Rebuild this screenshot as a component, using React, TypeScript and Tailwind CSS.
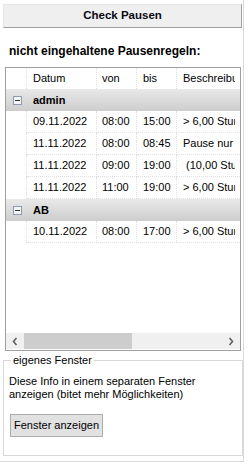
import React from 'react';

type Row = { datum: string; von: string; bis: string; text: string };
type Group = { name: string; rows: Row[] };

const groups: Group[] = [
  {
    name: 'admin',
    rows: [
      { datum: '09.11.2022', von: '08:00', bis: '15:00', text: '> 6,00 Stunden ohne Pause' },
      { datum: '11.11.2022', von: '08:00', bis: '08:45', text: 'Pause nur 0,25 Stunden' },
      { datum: '11.11.2022', von: '09:00', bis: '19:00', text: '\u00a0(10,00 Stunden)' },
      { datum: '11.11.2022', von: '11:00', bis: '19:00', text: '> 6,00 Stunden ohne Pause' },
    ],
  },
  {
    name: 'AB',
    rows: [{ datum: '10.11.2022', von: '08:00', bis: '17:00', text: '> 6,00 Stunden ohne Pause' }],
  },
];

const MinusBox: React.FC = () => (
  <span className="flex w-[9px] h-[9px] items-center justify-center border border-[#8f9bb0] bg-[#f4f4f4]">
    <span className="w-[5px] h-px bg-[#333]" />
  </span>
);

const Chevron: React.FC<{ dir: 'left' | 'right' }> = ({ dir }) => (
  <svg width="6" height="9" viewBox="0 0 6 9">
    <path
      d={dir === 'left' ? 'M4.5 1 L1.5 4.5 L4.5 8' : 'M1.5 1 L4.5 4.5 L1.5 8'}
      fill="none"
      stroke="#606060"
      strokeWidth="1.6"
    />
  </svg>
);

const DataRow: React.FC<{ row: Row }> = ({ row }) => (
  <div className="flex h-[22px] w-full overflow-hidden">
    <div className="w-[21px] shrink-0 border-r border-dotted border-[#e0e0e0]" />
    <div className="w-[70px] shrink-0 pl-[6px] flex items-center border-r border-b border-dotted border-[#e0e0e0]">{row.datum}</div>
    <div className="w-[40px] shrink-0 pl-[5px] flex items-center border-r border-b border-dotted border-[#e0e0e0]">{row.von}</div>
    <div className="w-[40px] shrink-0 pl-[6px] flex items-center border-r border-b border-dotted border-[#e0e0e0]">{row.bis}</div>
    <div className="flex-1 min-w-0 pl-[6px] flex items-center overflow-hidden whitespace-nowrap border-b border-dotted border-[#e0e0e0]">
      <span className="block w-[52px] overflow-hidden">{row.text}</span>
    </div>
  </div>
);

const App: React.FC = () => {
  return (
    <div className="w-[248px] h-[464px] bg-white overflow-hidden text-[11px] text-black font-['Liberation_Sans',Arial,sans-serif]">
      <div className="w-[244px] h-[462px] flex flex-col pl-[3px] pt-[4px] border-r border-b border-[#d9d9d9]">
        {/* header */}
        <div className="w-[239px] h-[24px] flex items-center justify-center bg-[#efefef] border-t border-l border-[#e6e6e6] border-r-[#a0a0a0] border-b-[#a0a0a0] border-r border-b font-bold text-[11.5px] text-[#0a0a14]">
          Check Pausen
        </div>

        <div className="mt-[16px] ml-[6px] h-[15px] leading-[15px] font-bold text-[12px]">nicht eingehaltene Pausenregeln:</div>

        {/* grid */}
        <div className="mt-[8px] ml-[2px] w-[236px] h-[284px] border border-[#a0a0a0] flex flex-col overflow-hidden">
          <div className="flex h-[21px] w-full overflow-hidden">
            <div className="w-[21px] shrink-0 border-r border-dotted border-[#e0e0e0]" />
            <div className="w-[70px] shrink-0 pl-[6px] flex items-center border-r border-dotted border-[#e0e0e0]">Datum</div>
            <div className="w-[40px] shrink-0 pl-[5px] flex items-center border-r border-dotted border-[#e0e0e0]">von</div>
            <div className="w-[40px] shrink-0 pl-[6px] flex items-center border-r border-dotted border-[#e0e0e0]">bis</div>
            <div className="flex-1 min-w-0 pl-[6px] flex items-center overflow-hidden whitespace-nowrap">
              <span className="block w-[52px] overflow-hidden">Beschreibung</span>
            </div>
          </div>

          {groups.map((g) => (
            <React.Fragment key={g.name}>
              <div className="flex h-[22px] items-center bg-gradient-to-b from-[#e9e9e9] to-[#cdcdcd]">
                <div className="w-[21px] flex justify-center pl-px">
                  <MinusBox />
                </div>
                <div className="pl-[6px] font-bold">{g.name}</div>
              </div>
              {g.rows.map((r, i) => (
                <DataRow key={i} row={r} />
              ))}
            </React.Fragment>
          ))}

          <div className="flex-1" />

          {/* horizontal scrollbar */}
          <div className="h-[16px] mb-px flex items-center bg-[#f0f0f0]">
            <div className="w-[18px] flex justify-center">
              <Chevron dir="left" />
            </div>
            <div className="w-[108px] h-full bg-[#cdcdcd]" />
            <div className="flex-1" />
            <div className="w-[18px] flex justify-center">
              <Chevron dir="right" />
            </div>
          </div>
        </div>

        {/* group box */}
        <fieldset className="mt-[3px] w-[240px] h-[102px] border border-[#d8d8d8] px-[4px]">
          <legend className="ml-[3px] px-[2px] leading-[13px]">eigenes Fenster</legend>
          <p className="mt-[8px] leading-[13px] pl-px">
            Diese Info in einem separaten Fenster
            <br />
            anzeigen (bitet mehr Möglichkeiten)
          </p>
          <button className="mt-[13px] ml-[2px] h-[23px] w-[93px] bg-[#e1e1e1] border border-[#adadad] text-[11px] text-black">
            Fenster anzeigen
          </button>
        </fieldset>
      </div>
    </div>
  );
};

export default App;
